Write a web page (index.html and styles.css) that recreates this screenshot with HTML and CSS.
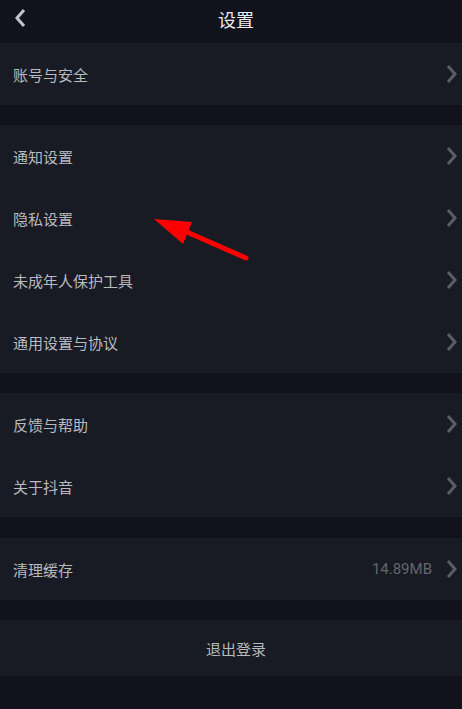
FILE: index.html
```html
<!DOCTYPE html>
<html>
  <head>
    <title>设置</title>
    <link rel="stylesheet" href="styles.css">
    <meta name="viewport" content="width=device-width, initial-scale=1" />
  </head>
  <body>
    <div class="page">
      <div class="header">
        <svg class="back" width="12" height="20" viewBox="0 0 12 20"><path d="M10 2 L3 10 L10 18" fill="none" stroke="#c4c5ca" stroke-width="3"/></svg>
        <span class="heading">设置</span>
      </div>

      <div class="group">
        <div class="row"><span class="label">账号与安全</span><span class="more"><svg width="12" height="20" viewBox="0 0 12 20"><path d="M2 2 L9 10 L2 18" fill="none" stroke="#5b5d66" stroke-width="3"/></svg></span></div>
      </div>

      <div class="group">
        <div class="row"><span class="label">通知设置</span><span class="more"><svg width="12" height="20" viewBox="0 0 12 20"><path d="M2 2 L9 10 L2 18" fill="none" stroke="#5b5d66" stroke-width="3"/></svg></span></div>
        <div class="row"><span class="label">隐私设置</span><span class="more"><svg width="12" height="20" viewBox="0 0 12 20"><path d="M2 2 L9 10 L2 18" fill="none" stroke="#5b5d66" stroke-width="3"/></svg></span></div>
        <div class="row"><span class="label">未成年人保护工具</span><span class="more"><svg width="12" height="20" viewBox="0 0 12 20"><path d="M2 2 L9 10 L2 18" fill="none" stroke="#5b5d66" stroke-width="3"/></svg></span></div>
        <div class="row"><span class="label">通用设置与协议</span><span class="more"><svg width="12" height="20" viewBox="0 0 12 20"><path d="M2 2 L9 10 L2 18" fill="none" stroke="#5b5d66" stroke-width="3"/></svg></span></div>
      </div>

      <div class="group">
        <div class="row"><span class="label">反馈与帮助</span><span class="more"><svg width="12" height="20" viewBox="0 0 12 20"><path d="M2 2 L9 10 L2 18" fill="none" stroke="#5b5d66" stroke-width="3"/></svg></span></div>
        <div class="row"><span class="label">关于抖音</span><span class="more"><svg width="12" height="20" viewBox="0 0 12 20"><path d="M2 2 L9 10 L2 18" fill="none" stroke="#5b5d66" stroke-width="3"/></svg></span></div>
      </div>

      <div class="group gap-wide">
        <div class="row"><span class="label">清理缓存</span><span class="more"><span class="value">14.89MB</span><svg width="12" height="20" viewBox="0 0 12 20"><path d="M2 2 L9 10 L2 18" fill="none" stroke="#5b5d66" stroke-width="3"/></svg></span></div>
      </div>

      <div class="group">
        <div class="logout">退出登录</div>
      </div>

      <svg class="pointer" width="462" height="709" viewBox="0 0 462 709">
        <line x1="246" y1="258" x2="180" y2="229" stroke="#ff0000" stroke-width="5" stroke-linecap="round"/>
        <polygon points="154,219 192,222 183,244" fill="#ff0000"/>
      </svg>
    </div>
  </body>
</html>
```

FILE: styles.css
```css
body {margin: 0; background-color: #11121b; font-family: "Noto Sans CJK SC", "Noto Sans", sans-serif;}
.page {position: relative; width: 462px; height: 709px; overflow: hidden; background-color: #11121b;}
.header {position: relative; height: 43px; display: flex; align-items: center; justify-content: center; padding-left: 10px;}
.back {position: absolute; left: 14px; top: 8px;}
.heading {color: #ebebed; font-size: 18px; line-height: 43px; margin-top: -4px;}
.group {background-color: #181a24; margin-bottom: 20px;}
.gap-wide {margin-top: 21px;}
.row {height: 62px; display: flex; align-items: center; justify-content: space-between; padding: 0 4px 0 13px;}
.label {color: #b9babe; font-size: 15px;}
.more {display: flex; align-items: center; gap: 14px;}
.more svg {display: block;}
.value {color: #64666e; font-family: Roboto, "Noto Sans", sans-serif; font-size: 15px;}
.logout {height: 56px; display: flex; align-items: center; justify-content: center; padding-left: 10px; color: #b9babe; font-size: 15px;}
.pointer {position: absolute; left: 0; top: 0; pointer-events: none;}
```
